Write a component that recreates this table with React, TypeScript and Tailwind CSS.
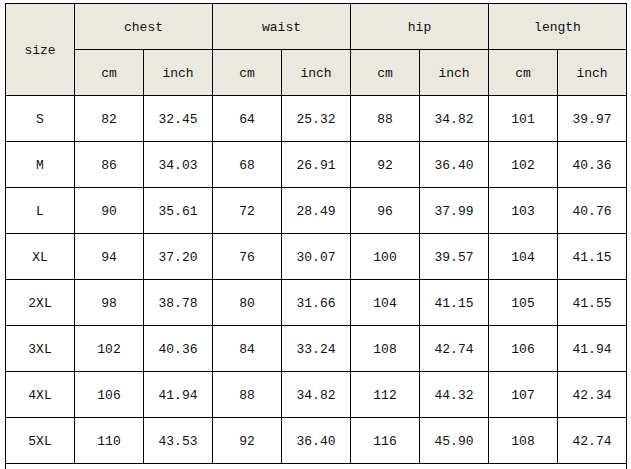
const measures = ["chest", "waist", "hip", "length"]

const rows: [string, ...string[]][] = [
  ["S", "82", "32.45", "64", "25.32", "88", "34.82", "101", "39.97"],
  ["M", "86", "34.03", "68", "26.91", "92", "36.40", "102", "40.36"],
  ["L", "90", "35.61", "72", "28.49", "96", "37.99", "103", "40.76"],
  ["XL", "94", "37.20", "76", "30.07", "100", "39.57", "104", "41.15"],
  ["2XL", "98", "38.78", "80", "31.66", "104", "41.15", "105", "41.55"],
  ["3XL", "102", "40.36", "84", "33.24", "108", "42.74", "106", "41.94"],
  ["4XL", "106", "41.94", "88", "34.82", "112", "44.32", "107", "42.34"],
  ["5XL", "110", "43.53", "92", "36.40", "116", "45.90", "108", "42.74"],
]

const head = "flex items-center justify-center pt-[3px] bg-[#ebe9df]"
const cell = "flex items-center justify-center pt-[3px] bg-white"

export default function App() {
  return (
    <div className="min-h-[469px] bg-white pl-[5px] pt-[3px] font-['Liberation_Mono',monospace] text-[13px] text-[#111]">
      <div className="grid w-max grid-cols-[repeat(9,68px)] auto-rows-[45px] gap-px border border-black bg-black">
        {/* header */}
        <div className={`${head} row-span-2`}>size</div>
        {measures.map((m) => (
          <div key={m} className={`${head} col-span-2`}>
            {m}
          </div>
        ))}
        {measures.map((m) => [
          <div key={m + "cm"} className={head}>cm</div>,
          <div key={m + "in"} className={head}>inch</div>,
        ])}

        {/* data rows */}
        {rows.map((r) =>
          r.map((v, i) => (
            <div key={r[0] + i} className={cell}>
              {v}
            </div>
          ))
        )}

        {/* trailing note row, cut off by the window */}
        <div className={`${cell} col-span-9`} />
      </div>
    </div>
  )
}
